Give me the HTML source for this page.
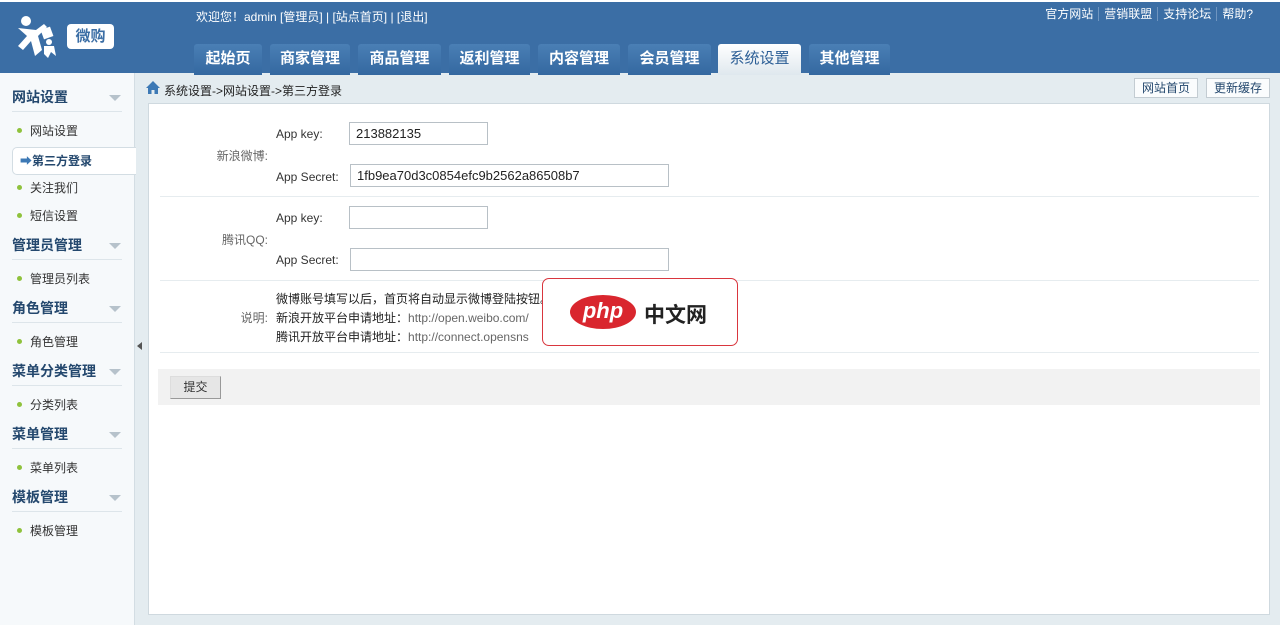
<!DOCTYPE html>
<html><head><meta charset="utf-8"><style>
*{margin:0;padding:0;box-sizing:border-box}
body{width:1280px;height:625px;overflow:hidden;font:12px "Liberation Sans","Noto Sans CJK SC",sans-serif;color:#333;background:#e4ecf0;position:relative}
.hd{position:absolute;left:0;top:0;width:1280px;height:73px;background:#3b6ea5;border-top:2px solid #fff}
.logo{position:absolute;left:16px;top:14px}
.wb{position:absolute;left:67px;top:22px;width:47px;height:25px;background:#fff;border-radius:4px;color:#3b6ea5;font-size:15px;font-weight:bold;text-align:center;line-height:25px}
.wel{position:absolute;left:196px;top:6px;color:#fff;font-size:12px}
.tr{position:absolute;right:22px;top:3px;color:#fff;font-size:12px}
.tr span{padding:0 5px;border-left:1px solid #6f95c0}.tr span:first-child{border:0}
.tab{position:absolute;top:42px;height:31px;background:linear-gradient(#4a7fb5,#3468a0);border-radius:3px 3px 0 0;color:#fff;font-size:15px;font-weight:bold;text-align:center;line-height:30px}
.tab.on{background:linear-gradient(#fff,#dfe8ee);color:#2d5f96;font-weight:normal}
.sb{position:absolute;left:0;top:73px;width:135px;height:552px;background:#f6f9fb;border-right:1px solid #d3dde3}
.h{position:absolute;left:12px;font-size:14px;font-weight:bold;color:#24486e}
.h:after{content:"";position:absolute;left:97px;top:8px;border:6px solid transparent;border-top:6px solid #b6c2cb}
.ln{position:absolute;left:12px;width:110px;border-top:1px solid #dde5ea}
.it{position:absolute;left:30px;font-size:12px;color:#333}
.it:before{content:"";position:absolute;left:-13px;top:6px;width:5px;height:5px;border-radius:50%;background:#8fc23c}
.act{position:absolute;left:12px;top:74px;width:124px;height:28px;background:#fff;border:1px solid #d3dde3;border-right:0;border-radius:5px 0 0 5px;font-weight:bold;color:#24486e;line-height:26px;padding-left:7px}
.bc{position:absolute;left:164px;top:82px;color:#222}
.btn{position:absolute;top:78px;height:20px;border:1px solid #c3ccd2;background:#fafcfd;color:#24486e;line-height:18px;padding:0 7px}
.pn{position:absolute;left:148px;top:103px;width:1122px;height:512px;background:#fff;border:1px solid #cfd9df}
.lab{position:absolute;color:#666;text-align:right;width:120px}
.k{position:absolute;left:276px;color:#333}
.in{position:absolute;height:23px;border:1px solid #b8c0c6;padding-left:6px;line-height:21px;font-size:13px;color:#222}
.dv{position:absolute;left:160px;width:1099px;border-top:1px solid #e6ecef}
.sub{position:absolute;left:158px;top:369px;width:1102px;height:36px;background:#f2f2f2}
.sbtn{position:absolute;left:12px;top:7px;width:51px;height:23px;border:1px solid #999;border-top-color:#ddd;border-left-color:#ddd;background:#e6e6e6;text-align:center;line-height:21px}
.php{position:absolute;left:542px;top:278px;width:196px;height:68px;background:#fff;border:1px solid #d9363e;border-radius:7px}
</style></head><body>
<div class="hd">
<svg class="logo" width="50" height="44" viewBox="0 0 50 44"><g fill="#fff"><circle cx="10" cy="5" r="5"/><path d="M2 12 L20 14 L28 8 L31 11 L22 20 L26 34 L19 40 L15 25 L7 34 L2 30 L11 20 Z"/><rect x="26" y="12" width="10" height="10" transform="rotate(-20 31 17)"/><circle cx="33" cy="26" r="3"/><path d="M28 30 L38 30 L40 40 L35 36 L32 42 L28 38 Z"/></g></svg>
<div class="wb">微购</div>
<div class="wel">欢迎您！admin [管理员] | [站点首页] | [退出]</div>
<div class="tr"><span>官方网站</span><span>营销联盟</span><span>支持论坛</span><span>帮助?</span></div>
<div class="tab" style="left:194px;width:68px">起始页</div>
<div class="tab" style="left:270px;width:80px">商家管理</div>
<div class="tab" style="left:358px;width:83px">商品管理</div>
<div class="tab" style="left:449px;width:81px">返利管理</div>
<div class="tab" style="left:538px;width:82px">内容管理</div>
<div class="tab" style="left:628px;width:83px">会员管理</div>
<div class="tab on" style="left:718px;width:83px">系统设置</div>
<div class="tab" style="left:809px;width:81px">其他管理</div>
</div>
<div class="sb">
<div class="h" style="top:14px">网站设置</div><div class="ln" style="top:38px"></div>
<div class="it" style="top:49px">网站设置</div>
<div class="act"><span style="color:#3d79b5">➡</span>第三方登录</div>
<div class="it" style="top:106px">关注我们</div>
<div class="it" style="top:134px">短信设置</div>
<div class="h" style="top:162px">管理员管理</div><div class="ln" style="top:186px"></div>
<div class="it" style="top:197px">管理员列表</div>
<div class="h" style="top:225px">角色管理</div><div class="ln" style="top:249px"></div>
<div class="it" style="top:260px">角色管理</div>
<div class="h" style="top:288px">菜单分类管理</div><div class="ln" style="top:312px"></div>
<div class="it" style="top:323px">分类列表</div>
<div class="h" style="top:351px">菜单管理</div><div class="ln" style="top:375px"></div>
<div class="it" style="top:386px">菜单列表</div>
<div class="h" style="top:414px">模板管理</div><div class="ln" style="top:438px"></div>
<div class="it" style="top:449px">模板管理</div>
</div>
<div style="position:absolute;left:137px;top:342px;border:4px solid transparent;border-right:5px solid #555;border-left:0"></div>
<svg style="position:absolute;left:146px;top:81px" width="14" height="13" viewBox="0 0 14 13"><path d="M7 0 L14 7 L12 7 L12 13 L8.5 13 L8.5 9 L5.5 9 L5.5 13 L2 13 L2 7 L0 7 Z" fill="#3d79b5"/></svg>
<div class="bc">系统设置-&gt;网站设置-&gt;第三方登录</div>
<div class="btn" style="left:1134px">网站首页</div>
<div class="btn" style="left:1206px">更新缓存</div>
<div class="pn"></div>
<div class="lab" style="left:148px;top:147px">新浪微博:</div>
<div class="k" style="top:127px">App key:</div>
<div class="in" style="left:349px;top:122px;width:139px">213882135</div>
<div class="k" style="top:170px">App Secret:</div>
<div class="in" style="left:350px;top:164px;width:319px">1fb9ea70d3c0854efc9b2562a86508b7</div>
<div class="dv" style="top:196px"></div>
<div class="lab" style="left:148px;top:231px">腾讯QQ:</div>
<div class="k" style="top:211px">App key:</div>
<div class="in" style="left:349px;top:206px;width:139px"></div>
<div class="k" style="top:253px">App Secret:</div>
<div class="in" style="left:350px;top:248px;width:319px"></div>
<div class="dv" style="top:280px"></div>
<div class="lab" style="left:148px;top:309px">说明:</div>
<div style="position:absolute;left:276px;top:290px;line-height:19px;color:#222">微博账号填写以后，首页将自动显示微博登陆按钮。<br>新浪开放平台申请地址：<span style="color:#666">http://open.weibo.com/</span><br>腾讯开放平台申请地址：<span style="color:#666">http://connect.opensns</span></div>
<div class="dv" style="top:352px"></div>
<div class="sub"><div class="sbtn">提交</div></div>
<div class="php"><div style="position:absolute;left:27px;top:16px;width:66px;height:34px;background:#d9262e;border-radius:50%;color:#fff;font:italic bold 22px 'Liberation Sans',sans-serif;text-align:center;line-height:32px">php</div><div style="position:absolute;left:101px;top:20px;font-size:21px;font-weight:bold;color:#222">中文网</div></div>
</body></html>
